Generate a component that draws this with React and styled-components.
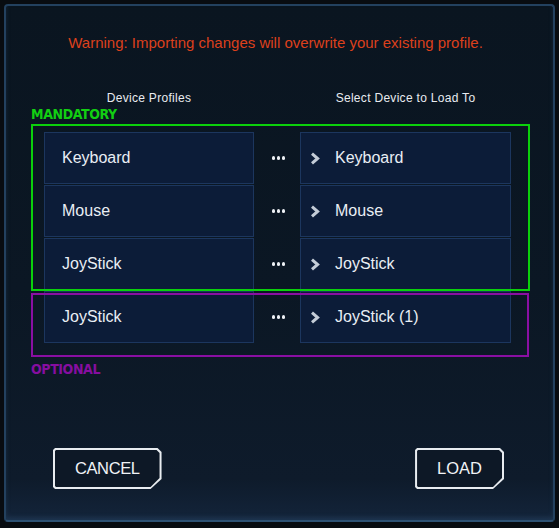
import * as React from 'react';
import styled, { createGlobalStyle } from 'styled-components';

const GlobalStyle = createGlobalStyle`
  html, body {
    margin: 0;
    padding: 0;
    background: #080c11;
  }
  body {
    font-family: "Liberation Sans", Arial, sans-serif;
  }
`;

const Screen = styled.div`
  width: 559px;
  height: 528px;
  padding: 4px 4px 6px 4px;
  box-sizing: border-box;
`;

const Panel = styled.div`
  height: 100%;
  box-sizing: border-box;
  border: 2px solid #23415f;
  border-bottom-color: #2e5274;
  border-radius: 4px;
  background: linear-gradient(180deg, #0a1520 0%, #0b1724 55%, #0e1b2b 92%, #13243a 100%);
  box-shadow: inset 0 -3px 4px rgba(60, 100, 140, 0.25);
  display: flex;
  flex-direction: column;
  padding: 28px 0 31px 0;
`;

const Warning = styled.div`
  color: #dc401c;
  font-size: 15px;
  line-height: 18px;
  text-align: center;
  padding-right: 8px;
`;

const Body = styled.div`
  padding-left: 25px;
  margin-top: 39px;
`;

const Columns = styled.div`
  display: grid;
  grid-template-columns: 210px 46px 211px;
  margin-left: 13px;
`;

const HeaderRow = styled(Columns)`
  color: #e8ebf0;
  font-size: 12px;
  line-height: 14px;
  letter-spacing: 0.3px;
  text-align: center;
`;

const GroupLabel = styled.div`
  color: ${p => p.$color};
  font-family: "DejaVu Sans Condensed", "Liberation Sans", sans-serif;
  font-stretch: condensed;
  font-weight: 700;
  font-size: 14px;
  letter-spacing: -0.4px;
  line-height: 16px;
  margin-top: ${p => p.$top || 0}px;
`;

const DeviceGrid = styled(Columns)`
  grid-template-rows: repeat(4, 52px);
  row-gap: 1px;
  margin-top: 10px;
`;

const Cell = styled.div`
  grid-column: ${p => p.$col};
  grid-row: ${p => p.$row};
  background: #0c1c38;
  border: 1px solid #1c365e;
  display: flex;
  align-items: center;
  gap: 15px;
  padding-left: ${p => (p.$target ? 9 : 17)}px;
  color: #e9eef4;
  font-size: 16px;
`;

const Dots = styled.div`
  grid-column: 2;
  grid-row: ${p => p.$row};
  display: flex;
  align-items: center;
  justify-content: center;
  gap: 1.5px;
  padding-left: 3px;
  span {
    width: 3.5px;
    height: 3.5px;
    border-radius: 50%;
    background: #eef1f5;
  }
`;

const Frame = styled.div`
  grid-column: 1 / -1;
  grid-row: ${p => p.$rows};
  margin: ${p => p.$margin};
  border: 2px solid ${p => p.$color};
  pointer-events: none;
  z-index: 1;
`;

const ButtonRow = styled.div`
  margin-top: auto;
  display: flex;
  justify-content: space-between;
  padding: 0 49px 0 47px;
`;

const NotchButton = styled.button`
  height: 41px;
  padding: 2px;
  border: none;
  background: #e8ecf0;
  cursor: pointer;
  clip-path: polygon(2px 0, calc(100% - 4px) 0, 100% 4px, 100% calc(100% - 10px), calc(100% - 11px) 100%, 2px 100%, 0 calc(100% - 2px), 0 2px);
`;

const ButtonFace = styled.span`
  height: 100%;
  display: flex;
  align-items: center;
  padding: 0 20px;
  background: #0d1826;
  color: #f0f3f6;
  font-family: "Liberation Sans", Arial, sans-serif;
  font-size: 16.5px;
  letter-spacing: ${p => p.$tight ? '-0.4px' : '0'};
  clip-path: polygon(1px 0, calc(100% - 3px) 0, 100% 3px, 100% calc(100% - 9px), calc(100% - 9px) 100%, 1px 100%, 0 calc(100% - 1px), 0 1px);
`;

const Chevron = () => (
  <svg width="10" height="13" viewBox="0 0 10 13">
    <polyline points="2,1.6 7.6,6.5 2,11.4" fill="none" stroke="#c4ccd7" strokeWidth="3" />
  </svg>
);

const rows = [
  ['Keyboard', 'Keyboard'],
  ['Mouse', 'Mouse'],
  ['JoyStick', 'JoyStick'],
  ['JoyStick', 'JoyStick (1)'],
];

export default function App() {
  return (
    <Screen>
      <GlobalStyle />
      <Panel>
        <Warning>Warning: Importing changes will overwrite your existing profile.</Warning>
        <Body>
          <HeaderRow>
            <div>Device Profiles</div>
            <div />
            <div>Select Device to Load To</div>
          </HeaderRow>
          <GroupLabel $color="#12cf12" $top={1}>MANDATORY</GroupLabel>
          <DeviceGrid>
            {rows.map(([from, to], i) => (
              <React.Fragment key={i}>
                <Cell $col={1} $row={i + 1}>{from}</Cell>
                <Dots $row={i + 1}><span /><span /><span /></Dots>
                <Cell $col={3} $row={i + 1} $target>
                  <Chevron />
                  {to}
                </Cell>
              </React.Fragment>
            ))}
            <Frame $rows="1 / 4" $color="#0bd00b" $margin="-8px -19px -1px -13px" />
            <Frame $rows="4 / 5" $color="#8a0fa3" $margin="2px -18px -14px -13px" />
          </DeviceGrid>
          <GroupLabel $color="#860ea0" $top={18}>OPTIONAL</GroupLabel>
        </Body>
        <ButtonRow>
          <NotchButton><ButtonFace $tight>CANCEL</ButtonFace></NotchButton>
          <NotchButton><ButtonFace>LOAD</ButtonFace></NotchButton>
        </ButtonRow>
      </Panel>
    </Screen>
  );
}
